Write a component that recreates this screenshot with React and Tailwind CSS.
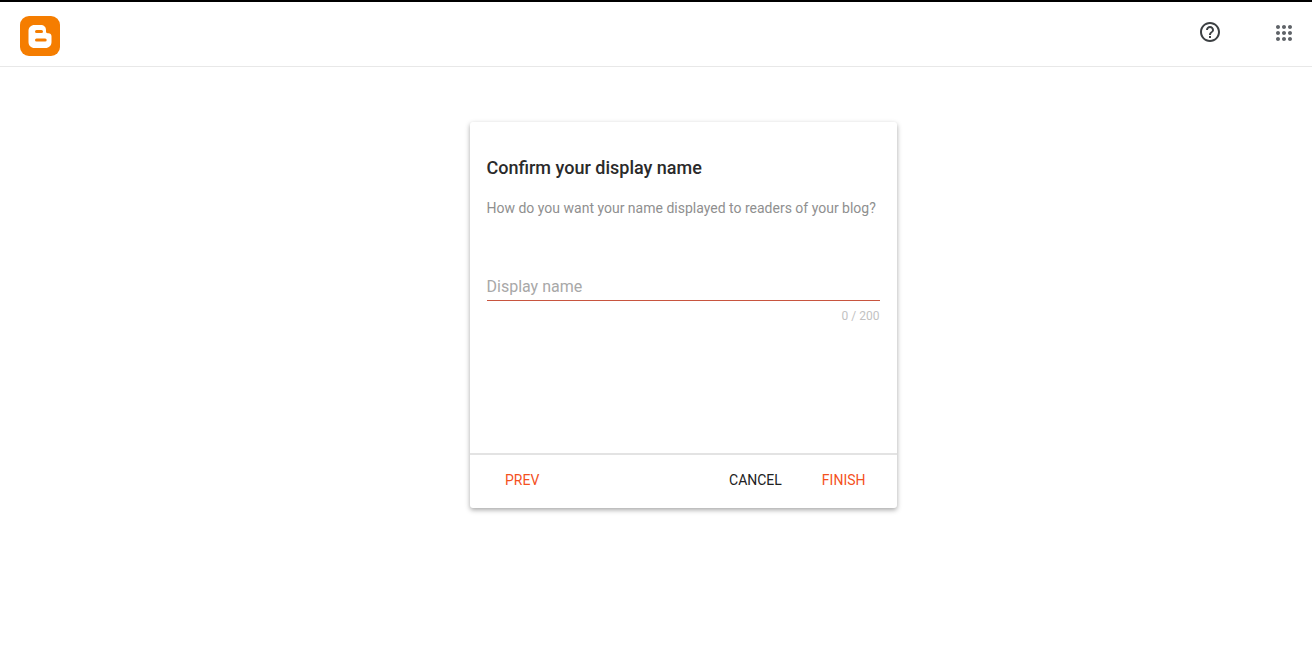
import React from "react";

function BloggerLogo() {
  return (
    <svg width="40" height="40" viewBox="0 0 40 40">
      <rect x="0" y="0" width="40" height="40" rx="9" fill="#f57d00" />
      <path fill="#fff" d="M14.500 9h6c3.500 0 5.500 2 5.500 5v1.500c0 1 .6 1.700 1.700 1.700h.8c1.700 0 3 1.200 3 3V26c0 3.500-2.500 6-6 6H14.500c-3.500 0-6-2.500-6-6V15c0-3.500 2.500-6 6-6z" />
      <rect x="15" y="14" width="8" height="3" rx="1.500" fill="#f57d00" />
      <rect x="15" y="22.500" width="11.700" height="3" rx="1.500" fill="#f57d00" />
    </svg>
  );
}

function HelpIcon() {
  return (
    <svg width="24" height="24" viewBox="0 0 24 24" fill="#3c4043">
      <path d="M11 18h2v-2h-2v2zm1-16C6.480 2 2 6.480 2 12s4.480 10 10 10 10-4.480 10-10S17.520 2 12 2zm0 18c-4.410 0-8-3.590-8-8s3.590-8 8-8 8 3.590 8 8-3.590 8-8 8zm0-14c-2.210 0-4 1.790-4 4h2c0-1.100.9-2 2-2s2 .9 2 2c0 2-3 1.750-3 5h2c0-2.250 3-2.500 3-5 0-2.210-1.790-4-4-4z" />
    </svg>
  );
}

function AppsIcon() {
  return (
    <svg width="24" height="24" viewBox="0 0 24 24" fill="#5f6368">
      <path d="M6 8c1.100 0 2-.9 2-2s-.9-2-2-2-2 .9-2 2 .9 2 2 2zm6 12c1.100 0 2-.9 2-2s-.9-2-2-2-2 .9-2 2 .9 2 2 2zm-6 0c1.100 0 2-.9 2-2s-.9-2-2-2-2 .9-2 2 .9 2 2 2zm0-6c1.100 0 2-.9 2-2s-.9-2-2-2-2 .9-2 2 .9 2 2 2zm6 0c1.100 0 2-.9 2-2s-.9-2-2-2-2 .9-2 2 .9 2 2 2zm4-8c0 1.100.9 2 2 2s2-.9 2-2-.9-2-2-2-2 .9-2 2zm-4 2c1.100 0 2-.9 2-2s-.9-2-2-2-2 .9-2 2 .9 2 2 2zm6 6c1.100 0 2-.9 2-2s-.9-2-2-2-2 .9-2 2 .9 2 2 2zm0 6c1.100 0 2-.9 2-2s-.9-2-2-2-2 .9-2 2 .9 2 2 2z" />
    </svg>
  );
}

export default function App() {
  return (
    <div className="h-[654px] bg-white font-['Roboto',sans-serif] flex flex-col overflow-hidden">
      <div className="h-[2px] bg-black shrink-0" />
      <header className="h-[65px] shrink-0 border-b border-[#e8e8e8] flex items-center pl-[20px] pr-[16px]">
        <div className="mt-[3px]"><BloggerLogo /></div>
        <div className="ml-auto flex items-center gap-[50px]">
          <div className="mt-[-5px]"><HelpIcon /></div>
          <div className="mt-[-2px]"><AppsIcon /></div>
        </div>
      </header>
      <main className="flex justify-center pt-[55px] pl-[55px]">
        <div className="w-[427px] h-[386px] bg-white rounded-[3px] shadow-[0_2px_5px_rgba(0,0,0,0.35)] flex flex-col">
          <div className="flex-1 pl-[17px] pr-[17px] pt-[34px]">
            <h1 className="ml-[-0.5px] text-[18px] leading-[24px] font-medium text-[#2a2a2a]">Confirm your display name</h1>
            <p className="ml-[-0.5px] mt-[18px] text-[14px] leading-[20px] text-[#8f8f8f]">How do you want your name displayed to readers of your blog?</p>
            <div className="mt-[58px] h-[25px] pt-[1px] border-b border-[#c8553f] text-[16px] leading-[20px] text-[#a8a8a8]"><span className="ml-[-0.5px]">Display name</span></div>
            <div className="mt-[8px] pr-[0.5px] text-right text-[12px] leading-[14px] text-[#c2c2c2]">0 / 200</div>
          </div>
          <div className="h-[55px] border-t-2 border-[#e3e3e3] flex items-center text-[14px] font-normal pl-[35px] pr-[31.5px]">
            <span className="mt-[-2px] text-[#f4511e]">PREV</span>
            <span className="mt-[-2px] ml-auto text-[#212121]">CANCEL</span>
            <span className="mt-[-2px] ml-[40px] text-[#f4511e]">FINISH</span>
          </div>
        </div>
      </main>
    </div>
  );
}
